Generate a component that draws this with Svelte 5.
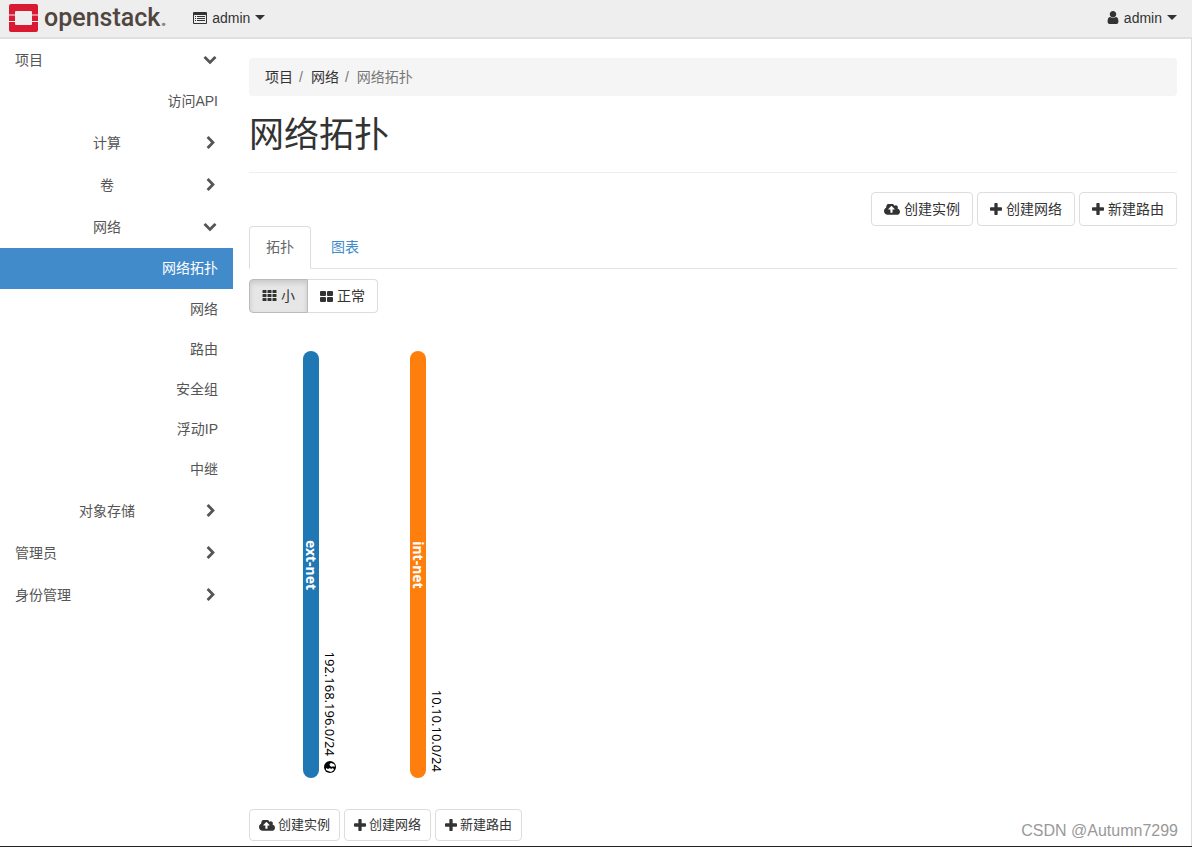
<script>
  const icons = {
    user: { box: '256 128 1280 1536', d: 'M1536 1399q0 109-62.5 187t-150.5 78h-854q-88 0-150.5-78t-62.5-187q0-85 8.5-160.5t31.5-152 58.5-131 94-89 134.5-34.5q131 128 313 128t313-128q76 0 134.5 34.5t94 89 58.5 131 31.5 152 8.5 160.5zm-256-887q0 159-112.5 271.5t-271.5 112.5-271.5-112.5-112.5-271.5 112.5-271.5 271.5-112.5 271.5 112.5 112.5 271.5z' },
    plus: { box: '192 128 1408 1408', d: 'M1600 736v192q0 40-28 68t-68 28h-416v416q0 40-28 68t-68 28h-192q-40 0-68-28t-28-68v-416h-416q-40 0-68-28t-28-68v-192q0-40 28-68t68-28h416v-416q0-40 28-68t68-28h192q40 0 68 28t28 68v416h416q40 0 68 28t28 68z' },
    cloud: { box: '-64 256 1920 1280', d: 'M1216 864q0-14-9-23l-352-352q-9-9-23-9t-23 9l-351 351q-10 12-10 24 0 14 9 23t23 9h224v352q0 13 9.5 22.5t22.5 9.5h192q13 0 22.5-9.5t9.5-22.5v-352h224q13 0 22.5-9.5t9.5-22.5zm640 288q0 159-112.5 271.5t-271.5 112.5h-1088q-185 0-316.5-131.5t-131.5-316.5q0-130 70-240t188-165q-2-30-2-43 0-212 150-362t362-150q156 0 285.5 87t188.5 231q71-62 166-62 106 0 181 75t75 181q0 76-41 138 130 31 213.5 135.5t83.5 238.5z' },
    right: { box: '-128 0 1792 1792', d: 'M1363 877l-742 742q-19 19-45 19t-45-19l-166-166q-19-19-19-45t19-45l531-531-531-531q-19-19-19-45t19-45l166-166q19-19 45-19t45 19l742 742q19 19 19 45t-19 45z' },
    down: { box: '0 128 1792 1792', d: 'M1683 808l-742 741q-19 19-45 19t-45-19l-742-741q-19-19-19-45.5t19-45.5l166-165q19-19 45-19t45 19l531 531 531-531q19-19 45-19t45 19l166 165q19 19 19 45.5t-19 45.5z' },
    list: { box: '0 0 14 12', d: 'M1 0h12A1 1 0 0 1 14 1v10a1 1 0 0 1-1 1H1A1 1 0 0 1 0 11V1A1 1 0 0 1 1 0zM1 3v7.500q0 .5.5.5h11q.5 0 .5-.5V3zM2 4h1v1H2zM4 4h8v1H4zM2 6h1v1H2zM4 6h8v1H4zM2 8h1v1H2zM4 8h8v1H4z' },
    th: { box: '0 0 14 12', d: 'M.5 0h3q.5 0 .5.5v2q0 .5-.5.5h-3q-.5 0-.5-.5v-2q0-.5.5-.5zM5.500 0h3q.5 0 .5.5v2q0 .5-.5.5h-3q-.5 0-.5-.5v-2q0-.5.5-.5zM10.500 0h3q.5 0 .5.5v2q0 .5-.5.5h-3q-.5 0-.5-.5v-2q0-.5.5-.5zM.5 4h3q.5 0 .5.5v2q0 .5-.5.5h-3q-.5 0-.5-.5v-2q0-.5.5-.5zM5.500 4h3q.5 0 .5.5v2q0 .5-.5.5h-3q-.5 0-.5-.5v-2q0-.5.5-.5zM10.500 4h3q.5 0 .5.5v2q0 .5-.5.5h-3q-.5 0-.5-.5v-2q0-.5.5-.5zM.5 8h3q.5 0 .5.5v2q0 .5-.5.5h-3q-.5 0-.5-.5v-2q0-.5.5-.5zM5.500 8h3q.5 0 .5.5v2q0 .5-.5.5h-3q-.5 0-.5-.5v-2q0-.5.5-.5zM10.500 8h3q.5 0 .5.5v2q0 .5-.5.5h-3q-.5 0-.5-.5v-2q0-.5.5-.5z' },
    large: { box: '0 0 13 11', d: 'M1 0h4q1 0 1 1v3q0 1-1 1H1Q0 5 0 4V1q0-1 1-1zM8 0h4q1 0 1 1v3q0 1-1 1H8Q7 5 7 4V1q0-1 1-1zM1 6h4q1 0 1 1v3q0 1-1 1H1q-1 0-1-1V7q0-1 1-1zM8 6h4q1 0 1 1v3q0 1-1 1H8q-1 0-1-1V7q0-1 1-1z' }
  };

  const menu = [
    { label: '项目', level: 1, open: true },
    { label: '访问API', level: 3, last: true },
    { label: '计算', level: 2 },
    { label: '卷', level: 2 },
    { label: '网络', level: 2, open: true },
    { label: '网络拓扑', level: 3, active: true },
    { label: '网络', level: 3 },
    { label: '路由', level: 3 },
    { label: '安全组', level: 3 },
    { label: '浮动IP', level: 3 },
    { label: '中继', level: 3, last: true },
    { label: '对象存储', level: 2 },
    { label: '管理员', level: 1 },
    { label: '身份管理', level: 1 }
  ];

  const actions = [
    { icon: 'cloud', label: '创建实例' },
    { icon: 'plus', label: '创建网络' },
    { icon: 'plus', label: '新建路由' }
  ];

  const networks = [
    { name: 'ext-net', cidr: '192.168.196.0/24', color: '#1f77b4', x: 54, external: true },
    { name: 'int-net', cidr: '10.10.10.0/24', color: '#ff7f0e', x: 161 }
  ];

  let size = $state('small');
</script>

{#snippet icon(name)}
  <svg class="icon {name}" viewBox={icons[name].box} aria-hidden="true">
    <path d={icons[name].d} fill-rule={name === 'list' ? 'evenodd' : 'nonzero'} />
  </svg>
{/snippet}

<header>
  <a class="brand" href="#home" aria-label="openstack">
    <svg class="mark" viewBox="0 0 29 28" aria-hidden="true">
      <path d="M2 0h25a2 2 0 0 1 2 2v8.500h-6V8a1 1 0 0 0-1-1H7a1 1 0 0 0-1 1v2.500H0V2a2 2 0 0 1 2-2z" />
      <path d="M0 11.500h6v5.500H0zM23 11.500h6v5.500h-6z" />
      <path d="M0 18h6v2a1 1 0 0 0 1 1h15a1 1 0 0 0 1-1v-2h6v8a2 2 0 0 1-2 2H2a2 2 0 0 1-2-2z" />
    </svg>
    <span class="word">openstack<span class="dot">.</span></span>
  </a>
  <button class="drop">{@render icon('list')}<span>admin</span><i class="caret"></i></button>
  <button class="drop account">{@render icon('user')}<span>admin</span><i class="caret"></i></button>
</header>

<div class="page">
  <nav class="side" aria-label="主菜单">
    {#each menu as m}
      {#if m.level === 3}
        <a class="leaf" class:active={m.active} class:last={m.last} href="#panel">{m.label}</a>
      {:else}
        <button class="head" class:sub={m.level === 2} aria-expanded={!!m.open}>
          <span>{m.label}</span>{@render icon(m.open ? 'down' : 'right')}
        </button>
      {/if}
    {/each}
  </nav>

  <main>
    <ol class="crumbs">
      <li><a href="#project">项目</a></li>
      <li><a href="#network">网络</a></li>
      <li class="here">网络拓扑</li>
    </ol>
    <h1>网络拓扑</h1>
    <div class="actions">
      {#each actions as a}
        <button class="btn">{@render icon(a.icon)}{a.label}</button>
      {/each}
    </div>
    <div class="tabs">
      <a class="tab on" href="#topology">拓扑</a>
      <a class="tab" href="#graph">图表</a>
    </div>
    <div class="toggle">
      <button class="btn" class:pressed={size === 'small'} onclick={() => (size = 'small')}>{@render icon('th')}小</button>
      <button class="btn" class:pressed={size === 'normal'} onclick={() => (size = 'normal')}>{@render icon('large')}正常</button>
    </div>
    <svg class="topology" width="260" height="427" viewBox="0 0 260 427">
      {#each networks as n}
        <g transform="translate({n.x} 0)">
          <rect width="16" height="427" rx="8" fill={n.color} />
          <text class="name" transform="translate(3 214) rotate(90)" text-anchor="middle">{n.name}</text>
          <text class="cidr" transform="translate(22 {n.external ? 405 : 421}) rotate(90)" text-anchor="end">{n.cidr}</text>
          {#if n.external}
            <g transform="translate(27 416) rotate(90)">
              <circle r="6" />
              <path fill="#fff" d="M-4-1L-3-4-1-5 0-4-1-3 0-2-1 0-3 .5zM1-3L3-4 5-1 4 2 3 4 1 4 2 2 1 0 2-1z" />
            </g>
          {/if}
        </g>
      {/each}
    </svg>
    <div class="actions small">
      {#each actions as a}
        <button class="btn">{@render icon(a.icon)}{a.label}</button>
      {/each}
    </div>
  </main>
</div>
<div class="watermark">CSDN @Autumn7299</div>

<style>
  :global(body) {
    margin: 0;
    background: #fff;
    color: #333;
    font: 14px/20px "Liberation Sans", "Noto Sans CJK SC", sans-serif;
  }
  :global(#app) {
    min-height: 100vh;
    box-sizing: border-box;
    display: flex;
    flex-direction: column;
    border-bottom: 1px solid #222;
    position: relative;
  }
  * { box-sizing: border-box; }
  a { color: inherit; text-decoration: none; }
  button {
    font: inherit;
    color: inherit;
    background: none;
    border: 0;
    padding: 0;
    cursor: pointer;
  }
  .icon { fill: currentColor; flex: none; width: 14px; height: 14px; }

  header {
    display: flex;
    align-items: center;
    height: 39px;
    padding: 0 15px 2px 9px;
    background: #eee;
    border-bottom: 2px solid #e0e0e0;
  }
  .brand { display: flex; align-items: center; gap: 6px; }
  .mark { width: 29px; height: 28px; fill: #da1a32; }
  .word { font: 500 25px/30px Roboto, sans-serif; color: #4f463f; }
  .dot { color: #8c8681; }
  .drop { display: flex; align-items: center; gap: 5px; margin-left: 26px; }
  .account { margin-left: auto; }
  .list { height: 12px; }
  .user { width: 12px; height: 13px; }
  .caret {
    border: 5px solid transparent;
    border-top-color: #333;
    border-bottom: 0;
  }

  .page { display: flex; flex: 1; border-right: 1px solid #ddd; }
  .side { width: 233px; flex: none; color: #555; }
  .head {
    display: flex;
    align-items: center;
    gap: 4px;
    width: 100%;
    height: 42px;
    padding: 0 16px 0 15px;
    text-align: left;
  }
  .head span { flex: 1; }
  .head.sub { text-align: center; }
  .leaf {
    display: block;
    padding: 10px 15px;
    text-align: right;
  }
  .last { padding-bottom: 11px; }
  .active { padding-bottom: 11px; background: #428bca; color: #fff; }

  main { flex: 1; padding: 19px 14px 5px 16px; min-width: 0; }
  .crumbs {
    display: flex;
    list-style: none;
    margin: 0;
    padding: 9px 16px;
    background: #f5f5f5;
    border-radius: 4px;
  }
  .crumbs li + li::before { content: "/"; color: #777; margin: 0 8px 0 6px; }
  .here { color: #777; }
  h1 {
    margin: 0 0 19px;
    padding: 19px 0 17px;
    border-bottom: 1px solid #eee;
    font-size: 35px;
    line-height: 40px;
    font-weight: 400;
  }
  .actions { display: flex; justify-content: flex-end; gap: 4px; }
  .btn {
    display: flex;
    align-items: center;
    gap: 4px;
    height: 34px;
    padding: 0 12px;
    border: 1px solid #ddd;
    border-radius: 4px;
    background: #fff;
  }
  .cloud { width: 16px; height: 11px; }
  .plus { width: 12px; height: 12px; }
  .th { width: 15px; height: 12px; }
  .large { width: 13px; height: 11px; }
  .tabs { display: flex; gap: 3px; border-bottom: 1px solid #e4e4e4; }
  .tab { padding: 10px 16px; border: 1px solid transparent; color: #428bca; }
  .on {
    color: #666;
    background: #fff;
    border-color: #ddd #ddd #fff;
    border-radius: 4px 4px 0 0;
    margin-bottom: -1px;
  }
  .toggle { display: flex; margin: 10px 0 38px; }
  .toggle .btn:first-child { border-radius: 4px 0 0 4px; }
  .toggle .btn:last-child { border-radius: 0 4px 4px 0; border-left: 0; }
  .pressed { background: #e6e6e6; border-color: #bbb; box-shadow: inset 0 3px 5px rgba(0, 0, 0, .125); }
  .topology { display: block; margin-bottom: 31px; }
  .name { font: bold 14px "Noto Sans", sans-serif; fill: #fff; }
  .cidr { font: 13px "Noto Sans", sans-serif; fill: #000; }
  .small { justify-content: flex-start; font-size: 13px; }
  .small .btn { height: 32px; padding: 0 9px; gap: 3px; }
  .watermark {
    position: absolute;
    right: 14px;
    bottom: 5px;
    color: #999;
    font-size: 16px;
    line-height: 20px;
  }
</style>
